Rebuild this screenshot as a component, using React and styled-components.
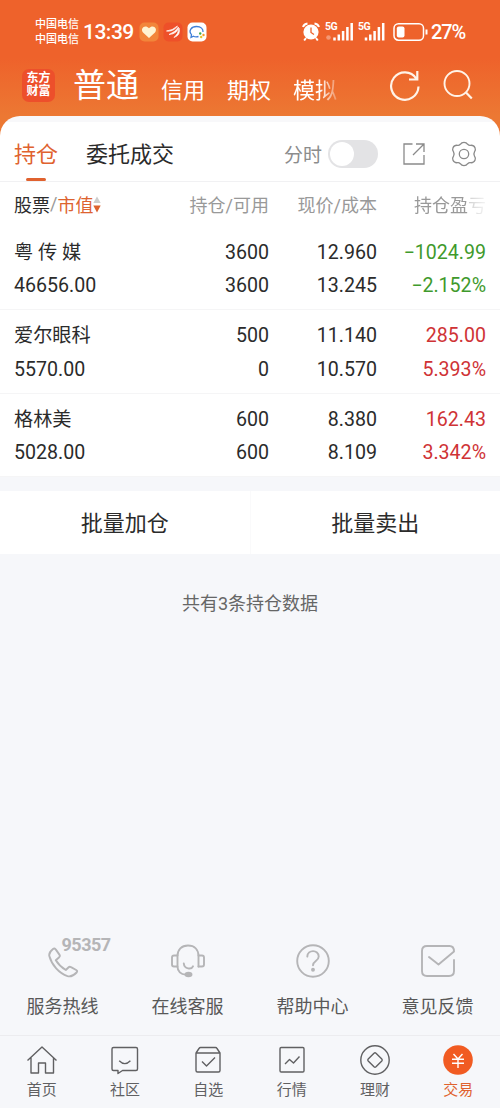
import React from "react";
import styled, { createGlobalStyle } from "styled-components";

const holdings = [
  { name: "粤 传 媒", value: "46656.00", amount: "3600", usable: "3600", price: "12.960", cost: "13.245", profit: "−1024.99", rate: "−2.152%", down: true },
  { name: "爱尔眼科", value: "5570.00", amount: "500", usable: "0", price: "11.140", cost: "10.570", profit: "285.00", rate: "5.393%" },
  { name: "格林美", value: "5028.00", amount: "600", usable: "600", price: "8.380", cost: "8.109", profit: "162.43", rate: "3.342%" },
];

const PhoneIcon = () => (
  <svg width="34" height="34" viewBox="0 0 34 34">
    <path d="M7 5C4.500 7 2.600 9.500 3.400 12.300C5.800 21 13 29.500 21.500 32.100C25.500 33.100 28.500 30.800 30.600 28.500C31.500 27.400 31.200 26.600 30.200 26L25 23.200C24 22.600 23.200 22.700 22.400 23.500L19.800 26C16.200 23.800 12 19.800 9.800 16.200L13.200 13.200C14 12.400 14.100 11.600 13.400 10.600L9.700 5.400C9 4.300 8 4.200 7 5Z" />
  </svg>
);

const HeadsetIcon = () => (
  <svg width="34" height="34" viewBox="0 0 34 34">
    <path d="M6.500 22.500V12C6.500 5.500 10.500 1.500 17 1.500S27.500 5.500 27.500 12V22.500" />
    <path d="M6.500 11.500H3Q1 11.500 1 13.500V20.500Q1 22.500 3 22.500H6.500C6.500 27.500 10 30.600 14.500 30.600M27.500 11.500H31Q33 11.500 33 13.500V20.500Q33 22.500 31 22.500H27.500" />
    <path d="M12.800 19.500C13.300 25.300 20.500 25.700 22 22.300" />
    <ellipse cx="17.500" cy="30.500" rx="3" ry="1.700" fill="currentColor" />
  </svg>
);

const HelpIcon = () => (
  <svg width="34" height="34" viewBox="0 0 34 34">
    <circle cx="17" cy="17" r="15.800" />
    <path d="M11.300 12.600C11.500 5.300 22.700 5.300 22.700 12.500C22.700 17.200 17 16.800 17 21.300" />
    <circle cx="17" cy="25.800" r="1" fill="currentColor" />
  </svg>
);

const FeedbackIcon = () => (
  <svg width="34" height="34" viewBox="0 0 34 34">
    <path d="M33 16V27Q33 32 28 32H6Q1 32 1 27V7Q1 2 6 2H28.500Q33 2 33 7.500L17.500 20.500L8 13" />
  </svg>
);

const HomeIcon = () => (
  <svg width="32" height="32" viewBox="0 0 32 32">
    <path d="M1.500 16.500L16 3L30.500 16.500M5 13.500V29H12.500V19H19.500V29H27.500V13.500" />
  </svg>
);

const CommunityIcon = () => (
  <svg width="32" height="32" viewBox="0 0 32 32">
    <path d="M4.500 3.500H27Q28.500 3.500 28.500 5V25Q28.500 26.500 27 26.500H13.500L9 29.500V26.500H4.500Q3 26.500 3 25V5Q3 3.500 4.500 3.500Z" />
    <path d="M10.200 16.800Q15.800 22.500 21.400 16.800" />
  </svg>
);

const WatchIcon = () => (
  <svg width="32" height="32" viewBox="0 0 32 32">
    <path d="M4 9L7 4.500Q7.700 3.500 8.500 3.500H23.500Q24.500 3.500 25 4.500L28 9V26.500Q28 28 26.500 28H5.500Q4 28 4 26.500V9H28M10 17.500L14.500 22L23 13.500" />
  </svg>
);

const MarketIcon = () => (
  <svg width="32" height="32" viewBox="0 0 32 32">
    <rect x="4" y="3.500" width="24" height="24.500" rx="1.200" />
    <path d="M9 20L13.500 15.500L17.500 19L23.500 12.500" />
  </svg>
);

const WealthIcon = () => (
  <svg width="32" height="32" viewBox="0 0 32 32">
    <circle cx="16" cy="16" r="14.200" />
    <path d="M15 9.200Q16 8.300 17 9.200L22.800 15Q23.700 16 22.800 17L17 22.800Q16 23.700 15 22.800L9.200 17Q8.300 16 9.200 15Z" />
  </svg>
);

const TradeIcon = () => (
  <svg width="32" height="32" viewBox="0 0 32 32">
    <circle cx="16" cy="16" r="14.800" fill="#f15b22" stroke="none" />
    <path stroke="#fff" d="M11.500 10L16 15L20.500 10M10 15.200H22M10 19.200H22M16 15V24" />
  </svg>
);

const Signal = ({ dot }) => (
  <SignalBox>
    <Network>5G</Network>
    <svg width="29" height="20" viewBox={dot ? "0 0 29 20" : "1.500 0 29 20"}>
      {dot && <circle cx="3.500" cy="15.500" r="2.300" fill="#fff" opacity="0.35" />}
      <path stroke="#fff" strokeWidth="2.500" d="M9.500 15.500V18.500M13.800 12.500V18.500M18.100 9V18.500M22.400 5V18.500M26.700 1V18.500" />
    </svg>
  </SignalBox>
);

const services = [
  { label: "服务热线", icon: <PhoneIcon />, tag: "95357" },
  { label: "在线客服", icon: <HeadsetIcon /> },
  { label: "帮助中心", icon: <HelpIcon /> },
  { label: "意见反馈", icon: <FeedbackIcon /> },
];

const tabs = [
  { label: "首页", icon: <HomeIcon /> },
  { label: "社区", icon: <CommunityIcon /> },
  { label: "自选", icon: <WatchIcon /> },
  { label: "行情", icon: <MarketIcon /> },
  { label: "理财", icon: <WealthIcon /> },
  { label: "交易", icon: <TradeIcon />, active: true },
];

const App = () => {
  return (
    <Page>
      <GlobalStyle />
      <StatusBar>
        <Carrier>
          <span>中国电信</span>
          <span>中国电信</span>
        </Carrier>
        <Clock>13:39</Clock>
        <Notices>
          <svg width="20" height="20" viewBox="0 0 20 20">
            <rect x="0.500" y="0.500" width="19" height="19" rx="5" fill="#f2853a" />
            <path d="M10 16L4 10.500C0.800 6.500 6 2 10 6.300C14 2 19.200 6.500 16 10.500Z" fill="#fff3d2" />
          </svg>
          <svg width="20" height="20" viewBox="0 0 20 20">
            <rect x="0.500" y="0.500" width="19" height="19" rx="5" fill="#ee5029" />
            <path d="M3.500 9Q9.500 8.500 14.500 4Q10.500 10 3.500 9ZM6 12.500Q12.500 10 15.500 5Q14.500 12 6 12.500ZM11 15.500Q15.500 12 16 6Q18 13 11 15.500Z" fill="#fff" stroke="#fff" strokeWidth="0.700" />
          </svg>
          <svg width="20" height="20" viewBox="0 0 20 20">
            <rect x="0.500" y="0.500" width="19" height="19" rx="5" fill="#fff" />
            <path d="M11.500 14.500Q8.500 15.300 6.500 14.200L4 15.300L4.500 12.700C1 8.500 4.500 4.500 9.500 4.500C14 4.500 16.300 7 16 10" fill="none" stroke="#3f7fd8" strokeWidth="1.300" />
            <circle cx="13.200" cy="11.500" r="1.200" fill="#3cae4c" />
            <circle cx="16.500" cy="13" r="1.200" fill="#f49a2b" />
            <circle cx="14.200" cy="15" r="1.200" fill="#e6c52f" />
          </svg>
        </Notices>
        <Spacer />
        <Alarm width="18" height="20" viewBox="0 0 18 20">
          <path d="M1 5Q2 2 5.500 1.500M17 5Q16 2 12.500 1.500M4 16L2.200 18.500M14 16L15.800 18.500" stroke="#fff" strokeWidth="2" fill="none" />
          <circle cx="9" cy="10" r="7.600" fill="#fff" />
          <path d="M9 5.500V10.500L12 12.500" stroke="#ee622b" strokeWidth="1.300" fill="none" />
        </Alarm>
        <Signal dot />
        <Signal />
        <Battery width="36" height="20" viewBox="0 0 36 20">
          <rect x="1" y="1.800" width="29.500" height="16.400" rx="4.500" fill="none" stroke="#fff" strokeWidth="1.500" />
          <rect x="3.800" y="4.500" width="7.700" height="11" rx="2" fill="#fff" />
          <path d="M33.500 7.500V12.500" stroke="#fff" strokeWidth="2" />
        </Battery>
        <Percent>27%</Percent>
      </StatusBar>

      <Header>
        <Logo>
          <span>东方</span>
          <span>财富</span>
        </Logo>
        <Account $current>普通</Account>
        <Account>信用</Account>
        <Account>期权</Account>
        <Account $fade>模拟</Account>
        <Spacer />
        <HeaderIcons>
          <svg width="32" height="32" viewBox="0 0 32 32">
            <path d="M29.500 17.500A13.700 13.700 0 1 1 27.200 9.500M28.300 2V10.500H20" />
          </svg>
          <svg width="32" height="32" viewBox="0 0 32 32">
            <circle cx="15" cy="14.500" r="12.500" strokeWidth="1.900" />
            <path d="M24 23.500L29.800 29.500" />
          </svg>
        </HeaderIcons>
      </Header>

      <Panel>
        <PanelTabs>
          <PanelTab $active>持仓</PanelTab>
          <PanelTab>委托成交</PanelTab>
          <Spacer />
          <SwitchLabel>分时</SwitchLabel>
          <Switch />
          <Tools>
            <svg width="26" height="26" viewBox="0 0 26 26">
              <path d="M11.500 3H3V23H23V14M15 3H23V11M23 3L12 14" />
            </svg>
            <svg width="26" height="26" viewBox="0 0 26 26">
              <path d="M9.300 3.300Q10.600 1.400 13 1.400T16.700 3.300Q18 4.600 19.500 4.300Q22.800 4 24 6.700Q25 9 23.500 10.900Q22.300 13 23.500 15.100Q25 17 24 19.300Q22.800 22 19.500 21.700Q18 21.400 16.700 22.700Q15.400 24.600 13 24.600T9.300 22.700Q8 21.400 6.500 21.700Q3.200 22 2 19.300Q1 17 2.500 15.100Q3.700 13 2.500 10.900Q1 9 2 6.700Q3.200 4 6.500 4.300Q8 4.600 9.300 3.300Z" />
              <circle cx="13" cy="13" r="4.700" />
            </svg>
          </Tools>
        </PanelTabs>

        <TableHead>
          <SortCell>
            股票<i>/</i><b>市值</b>
            <svg width="8" height="18" viewBox="0 0 8 18">
              <path d="M4 1.500L7.700 8H0.300Z" fill="#cdcdcd" />
              <path d="M4 17.500L0.300 10.500H7.700Z" fill="#dd632f" />
            </svg>
          </SortCell>
          <HeadCell>持仓/可用</HeadCell>
          <HeadCell>现价/成本</HeadCell>
          <HeadCell $fade>持仓盈亏</HeadCell>
        </TableHead>

        {holdings.map((item) => (
          <Holding key={item.name}>
            <Cell $left>
              <Name>{item.name}</Name>
              <span>{item.value}</span>
            </Cell>
            <Cell>
              <span>{item.amount}</span>
              <span>{item.usable}</span>
            </Cell>
            <Cell>
              <span>{item.price}</span>
              <span>{item.cost}</span>
            </Cell>
            <Cell $color={item.down ? "#3f9a2c" : "#cf3336"}>
              <span>{item.profit}</span>
              <span>{item.rate}</span>
            </Cell>
          </Holding>
        ))}
      </Panel>

      <Actions>
        <ActionButton>批量加仓</ActionButton>
        <ActionButton>批量卖出</ActionButton>
      </Actions>

      <Summary>共有3条持仓数据</Summary>

      <Services>
        {services.map((item) => (
          <Service key={item.label}>
            <ServiceIcon>
              {item.icon}
              {item.tag && <HotlineTag>{item.tag}</HotlineTag>}
            </ServiceIcon>
            <span>{item.label}</span>
          </Service>
        ))}
      </Services>

      <TabBar>
        {tabs.map((item) => (
          <Tab key={item.label} $active={item.active}>
            {item.icon}
            <span>{item.label}</span>
          </Tab>
        ))}
      </TabBar>
    </Page>
  );
};

const GlobalStyle = createGlobalStyle`
  * {
    box-sizing: border-box;
  }

  body {
    margin: 0;
  }

  button {
    font-family: inherit;
    border: 0;
    padding: 0;
    background: none;
  }

  svg {
    display: block;
    flex: none;
  }
`;

const Page = styled.div`
  width: 500px;
  height: 1108px;
  display: flex;
  flex-direction: column;
  overflow: hidden;
  font-family: Roboto, "Noto Sans CJK SC", sans-serif;
  color: #2b2b2b;
  background: linear-gradient(#ee622b 0, #ee622b 58px, #ec7833 116px, #ec7833 140px, #f6f7fa 140px);
`;

const Spacer = styled.div`
  flex: 1;
`;

const StatusBar = styled.div`
  height: 54px;
  flex: none;
  display: flex;
  align-items: center;
  padding: 10px 35px 0;
  color: #fff;
`;

const Carrier = styled.div`
  width: 48px;
  display: flex;
  flex-direction: column;
  font-size: 11px;
  font-weight: 500;
  line-height: 15px;
`;

const Clock = styled.div`
  width: 56px;
  font-size: 21px;
  font-weight: 500;
  line-height: 22px;
  letter-spacing: -0.5px;
`;

const Notices = styled.div`
  display: flex;
  gap: 4px;
`;

const Alarm = styled.svg`
  margin-right: 5px;
`;

const SignalBox = styled.div`
  position: relative;
  margin-right: 4px;
`;

const Network = styled.span`
  position: absolute;
  left: 0;
  top: 0;
  font-size: 10.5px;
  font-weight: 700;
  line-height: 10px;
  letter-spacing: -0.6px;
`;

const Battery = styled.svg`
  margin-left: 2px;
`;

const Percent = styled.div`
  width: 34px;
  margin-left: 2px;
  font-size: 20px;
  font-weight: 500;
  line-height: 22px;
  letter-spacing: -1.1px;
`;

const Header = styled.div`
  height: 62px;
  flex: none;
  display: flex;
  align-items: center;
  padding: 0 26px 0 22px;
  color: #fff;
`;

const Logo = styled.div`
  width: 33px;
  height: 33px;
  margin-right: 18px;
  display: flex;
  flex-direction: column;
  align-items: center;
  justify-content: center;
  border-radius: 7px;
  font-size: 12px;
  font-weight: 700;
  line-height: 13px;
  background: #ed4f2b;
`;

const Account = styled.div`
  font-size: ${(p) => (p.$current ? "33px" : "22px")};
  line-height: 40px;
  padding-top: ${(p) => (p.$current ? "2px" : "12px")};
  margin-right: 22px;
  ${(p) => p.$fade && "mask-image: linear-gradient(90deg, #000 60%, rgba(0, 0, 0, 0.25));"}
`;

const HeaderIcons = styled.div`
  display: flex;
  gap: 21px;

  svg {
    fill: none;
    stroke: #fff3e8;
    stroke-width: 2.2;
  }
`;

const Panel = styled.div`
  flex: none;
  border-radius: 20px 20px 0 0;
  background: linear-gradient(#f8f8fa 6px, #fff 6px);
`;

const PanelTabs = styled.div`
  height: 66px;
  display: flex;
  align-items: center;
  padding: 10px 23px 0 14px;
  border-bottom: 1px solid #f1f1f3;
`;

const PanelTab = styled.div`
  position: relative;
  margin-right: 28px;
  padding-top: 2px;
  font-size: 22px;
  line-height: 53px;
  color: ${(p) => (p.$active ? "#e0622f" : "#2b2b2b")};

  &::after {
    content: "";
    display: ${(p) => (p.$active ? "block" : "none")};
    position: absolute;
    left: 12px;
    bottom: 0;
    width: 20px;
    height: 3px;
    border-radius: 2px;
    background: #e0622f;
  }
`;

const SwitchLabel = styled.span`
  font-size: 19px;
  color: #8c8c8c;
`;

const Switch = styled.div`
  width: 50px;
  height: 28px;
  margin-left: 6px;
  padding: 2px;
  border-radius: 14px;
  background: #e3e3e5;

  &::before {
    content: "";
    display: block;
    width: 24px;
    height: 24px;
    border-radius: 50%;
    background: #fff;
  }
`;

const Tools = styled.div`
  display: flex;
  gap: 24px;
  margin-left: 23px;

  svg {
    fill: none;
    stroke: #8a8a8a;
    stroke-width: 1.3;
  }
`;

const TableHead = styled.div`
  height: 45px;
  display: grid;
  grid-template-columns: 146px 109px 108px 109px;
  align-items: center;
  padding: 0 14px 2px;
  font-size: 18px;
`;

const SortCell = styled.div`
  display: flex;
  align-items: center;

  i {
    font-style: normal;
    color: #999;
  }

  b {
    font-weight: 400;
    color: #dd632f;
  }
`;

const HeadCell = styled.div`
  text-align: right;
  color: #999;
  ${(p) => p.$fade && "mask-image: linear-gradient(90deg, #000 82%, rgba(0, 0, 0, 0.45) 84%, rgba(0, 0, 0, 0.1));"}
`;

const Holding = styled.div`
  height: 83.4px;
  display: grid;
  grid-template-columns: 146px 109px 108px 109px;
  align-items: center;
  padding: 2px 14px 0;
  border-bottom: 1px solid #f5f5f6;
`;

const Cell = styled.div`
  display: flex;
  flex-direction: column;
  align-items: ${(p) => (p.$left ? "flex-start" : "flex-end")};
  font-size: 19.6px;
  line-height: 33.4px;
  color: ${(p) => p.$color || "#2b2b2b"};
`;

const Name = styled.span`
  font-size: 19.2px;
`;

const Actions = styled.div`
  height: 63px;
  flex: none;
  display: flex;
  margin-top: 14px;
  background: #fff;
`;

const ActionButton = styled.button`
  flex: 1;
  padding-bottom: 3px;
  font-size: 22px;
  color: #2b2b2b;

  & + & {
    border-left: 1px solid #fafafb;
  }
`;

const Summary = styled.div`
  padding-top: 36px;
  font-size: 18px;
  line-height: 28px;
  text-align: center;
  color: #666;
`;

const Services = styled.div`
  margin-top: auto;
  height: 91px;
  flex: none;
  display: grid;
  grid-template-columns: repeat(4, 1fr);
`;

const Service = styled.div`
  display: flex;
  flex-direction: column;
  align-items: center;
  gap: 15px;
  font-size: 18px;
  line-height: 28px;
  color: #585858;
`;

const ServiceIcon = styled.div`
  position: relative;
  color: #b5b5b7;

  svg {
    fill: none;
    stroke: currentColor;
    stroke-width: 1.9;
    stroke-linecap: round;
    stroke-linejoin: round;
  }
`;

const HotlineTag = styled.span`
  position: absolute;
  left: 16px;
  top: -8px;
  font-size: 18px;
  font-weight: 700;
  line-height: 18px;
  letter-spacing: -0.5px;
`;

const TabBar = styled.div`
  height: 73px;
  flex: none;
  display: grid;
  grid-template-columns: repeat(6, 1fr);
  border-top: 1px solid #ececef;
`;

const Tab = styled.div`
  display: flex;
  flex-direction: column;
  align-items: center;
  padding-top: 8px;
  font-size: 15px;
  line-height: 28px;
  color: ${(p) => (p.$active ? "#e0622f" : "#606062")};

  svg {
    fill: none;
    stroke: #606062;
    stroke-width: 1.4;
    stroke-linejoin: round;
  }
`;

export default App;
